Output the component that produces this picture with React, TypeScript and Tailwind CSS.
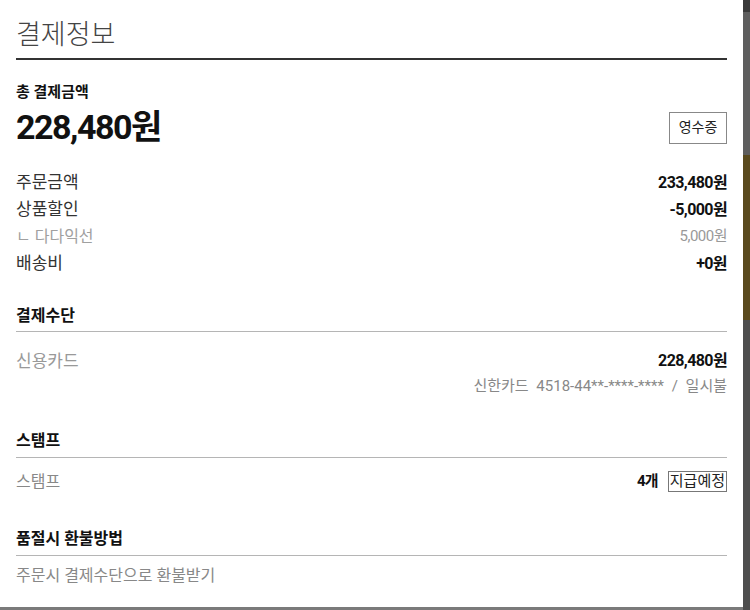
const kr = "font-['Roboto','Noto_Sans_CJK_KR',sans-serif]";

function Row({ label, value, muted }: { label: string; value: string; muted?: boolean }) {
  return (
    <div className="flex h-[27px] items-center justify-between">
      <span className={muted ? 'text-[16px] text-[#a0a0a0]' : 'text-[17px] text-[#333]'}>{label}</span>
      <span
        className={
          muted
            ? 'text-[15px] tracking-[-0.5px] text-[#999]'
            : 'text-[16px] font-bold tracking-[-0.6px] text-[#111]'
        }
      >
        {value}
      </span>
    </div>
  );
}

function SectionTitle({ children }: { children: string }) {
  return (
    <div className="flex h-[30px] items-center border-b border-[#b5b5b5] pb-[2px] text-[16px] font-bold text-[#111]">
      {children}
    </div>
  );
}

export default function App() {
  return (
    <div className={`flex h-[610px] w-[750px] ${kr}`}>
      <div className="flex h-full w-[743px] flex-col border-b-[3px] border-[#7a7a7a] bg-white px-4">
        {/* title */}
        <div className="flex h-[60px] items-end border-b-2 border-[#333] pb-[9px]">
          <h1 className="text-[27px] font-light leading-none text-[#444]">결제정보</h1>
        </div>

        {/* total */}
        <div className="mt-[22px] text-[15px] font-bold leading-[20px] text-[#111]">총 결제금액</div>
        <div className="mt-[8px] flex items-center justify-between">
          <span className="text-[34px] font-bold leading-none tracking-[-1.5px] text-[#111]">228,480원</span>
          <button className="mt-[1px] flex h-[32px] w-[58px] items-center justify-center border border-[#888] text-[14px] text-[#222]">
            영수증
          </button>
        </div>

        <div className="mt-[25px] flex flex-col">
          <Row label="주문금액" value="233,480원" />
          <Row label="상품할인" value="-5,000원" />
          <Row label="ㄴ 다다익선" value="5,000원" muted />
          <Row label="배송비" value="+0원" />
        </div>

        {/* payment method */}
        <div className="mt-[25px]">
          <SectionTitle>결제수단</SectionTitle>
        </div>
        <div className="mt-[17px] flex items-start justify-between">
          <span className="text-[17px] text-[#999]">신용카드</span>
          <div className="flex flex-col items-end">
            <span className="text-[16px] font-bold tracking-[-0.6px] text-[#111]">228,480원</span>
            <span className="mt-[2px] text-[15px] text-[#888] [word-spacing:4px]">신한카드 4518-44**-****-**** / 일시불</span>
          </div>
        </div>

        {/* stamp */}
        <div className="mt-[30px]">
          <SectionTitle>스탬프</SectionTitle>
        </div>
        <div className="mt-[12px] flex items-center justify-between">
          <span className="text-[16px] text-[#888]">스탬프</span>
          <div className="flex items-center gap-[10px]">
            <span className="text-[15px] font-bold tracking-[-0.8px] text-[#111]">4개</span>
            <span className="flex h-[21px] items-center border border-[#777] px-[1px] text-[15px] leading-none text-[#222]">
              지급예정
            </span>
          </div>
        </div>

        {/* refund */}
        <div className="mt-[32px]">
          <SectionTitle>품절시 환불방법</SectionTitle>
        </div>
        <div className="mt-[8px] text-[16px] text-[#888]">주문시 결제수단으로 환불받기</div>
      </div>

      {/* right edge strip */}
      <div className="flex h-full w-[7px] flex-col">
        <div className="h-[12px] bg-[#3a3a3a]" />
        <div className="h-[143px] bg-[#5e5e5e]" />
        <div className="h-[165px] bg-[#5a4a1e]" />
        <div className="flex-1 bg-[#4e4e4e]" />
      </div>
    </div>
  );
}
